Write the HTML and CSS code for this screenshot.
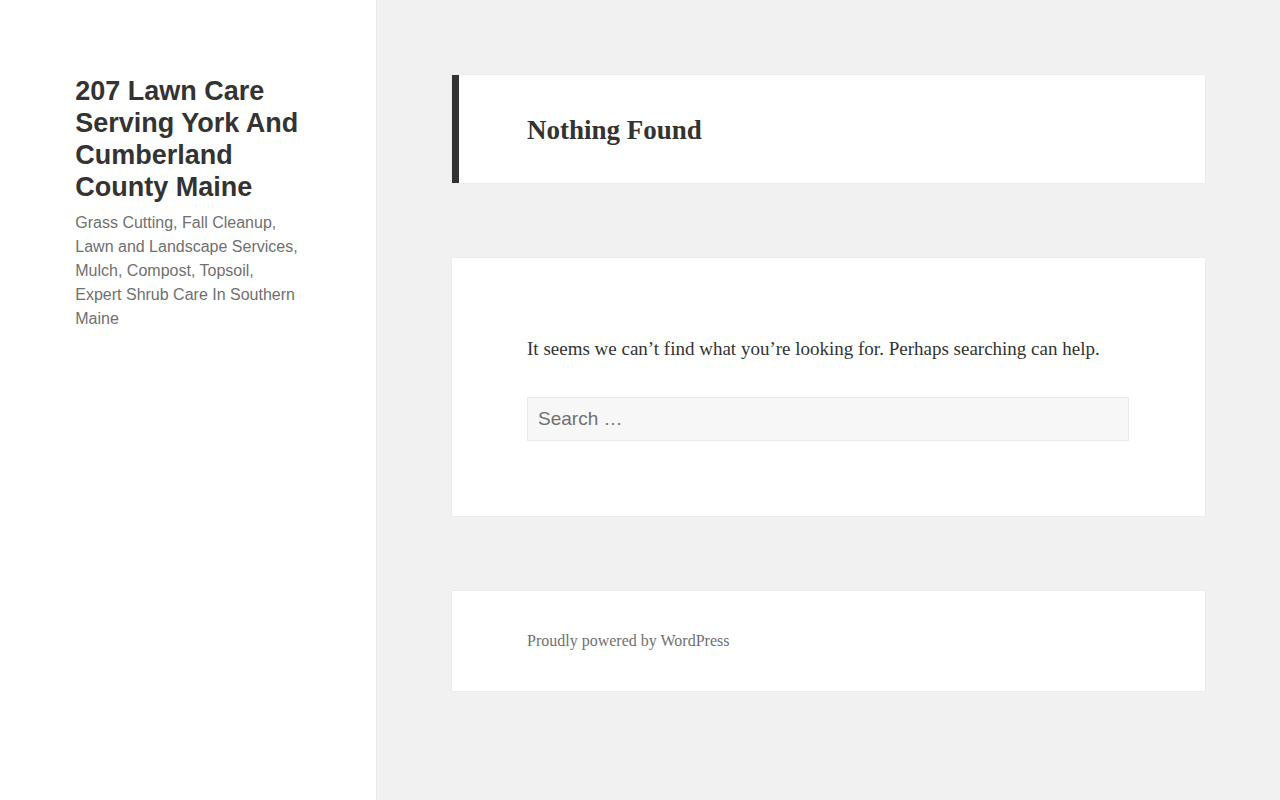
FILE: index.html
```html
<!DOCTYPE html>
<html lang="en-US">
<head>
    <meta charset="UTF-8">
    <meta name="viewport" content="width=device-width, initial-scale=1.0">
    <title>Nothing Found – 207 Lawn Care Serving York And Cumberland County Maine</title>
    <link rel="stylesheet" href="styles.css">
</head>
<body>

    <div class="site">
        <!-- Sidebar with site branding -->
        <div class="sidebar">
            <header class="site-header">
                <p class="site-title"><a href="#">207 Lawn Care Serving York And Cumberland County Maine</a></p>
                <p class="site-description">Grass Cutting, Fall Cleanup, Lawn and Landscape Services, Mulch, Compost, Topsoil, Expert Shrub Care In Southern Maine</p>
            </header>
        </div>

        <div class="site-content">
            <main class="site-main">
                <header class="page-header">
                    <h1 class="page-title">Nothing Found</h1>
                </header>

                <section class="page-content">
                    <p>It seems we can&rsquo;t find what you&rsquo;re looking for. Perhaps searching can help.</p>
                    <form class="search-form" role="search" onsubmit="return false;">
                        <label>
                            <input type="search" class="search-field" placeholder="Search &hellip;" name="s">
                        </label>
                    </form>
                </section>
            </main>

            <footer class="site-footer">
                <div class="site-info">
                    <a href="#">Proudly powered by WordPress</a>
                </div>
            </footer>
        </div>
    </div>

</body>
</html>
```

FILE: styles.css
```css
body {
    margin: 0;
    background-color: #f1f1f1;
    color: #333333;
    font-family: "Liberation Serif", "Times New Roman", serif;
    font-size: 19px;
    line-height: 32px;
}

a {
    color: inherit;
    text-decoration: none;
}

.site {
    display: flex;
    align-items: flex-start;
    min-height: 100vh;
}

/* Sidebar */
.sidebar {
    flex: 0 0 29.4118%;
    align-self: stretch;
    min-height: 100vh;
    background-color: #fff;
    box-shadow: 0 0 1px rgba(0, 0, 0, 0.15);
}

.site-header {
    padding: 75px 20% 0;
}

.site-title {
    margin: 0 -8px 0 0;
    font-family: "Liberation Sans", Arial, sans-serif;
    font-size: 27px;
    font-weight: 700;
    line-height: 32px;
    color: #333333;
}

.site-description {
    margin: 8px 0 0;
    font-family: "Liberation Sans", Arial, sans-serif;
    font-size: 16px;
    line-height: 24px;
    color: #707070;
}

/* Main column */
.site-content {
    width: 58.8235%;
    margin-left: 5.8824%;
    padding-top: 75px;
}

.page-header,
.page-content,
.site-footer {
    background-color: #fff;
    box-shadow: 0 0 1px rgba(0, 0, 0, 0.15);
}

.page-header {
    border-left: 7px solid #333333;
    padding: 39px 10% 37px calc(10% - 7px);
}

.page-title {
    margin: 0;
    font-size: 27px;
    font-weight: 700;
    line-height: 32px;
}

.page-content {
    margin-top: 75px;
    padding: 75px 10%;
}

.page-content p {
    margin: 0 0 32px;
}

.search-form label {
    display: block;
}

.search-field {
    display: block;
    box-sizing: border-box;
    width: 100%;
    height: 44px;
    margin: 0;
    padding: 7px 10px;
    border: 1px solid #eaeaea;
    border-radius: 0;
    background-color: #f7f7f7;
    color: #707070;
    font-family: "Liberation Sans", Arial, sans-serif;
    font-size: 19px;
    line-height: 28px;
    outline: none;
}

.search-field::placeholder {
    color: #707070;
    opacity: 1;
}

/* Footer */
.site-footer {
    margin: 75px 0 109px;
    padding: 38px 10%;
}

.site-info {
    font-size: 16px;
    line-height: 24px;
    color: #707070;
}
```
